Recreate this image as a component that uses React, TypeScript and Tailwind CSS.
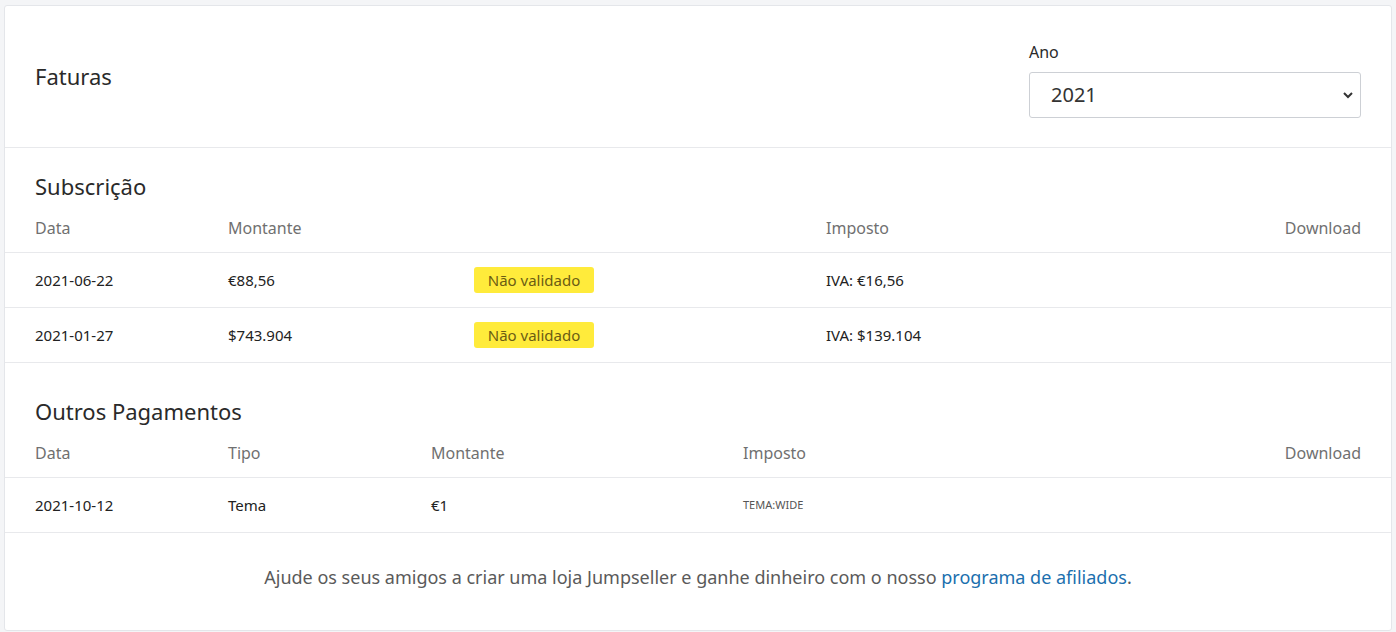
export default function App() {
  const Badge = () => (
    <span className="inline-flex h-[26px] w-[120px] items-center justify-center rounded-[3px] bg-[#ffeb3b] text-[15px] text-[#6b5c14]">Não validado</span>
  );
  const th = "text-[16px] text-[#707070]";
  const td = "text-[15px] text-[#222]";
  return (
    <div className="min-h-[632px] bg-[#f4f5f7] px-[4px] pt-[5px] font-['Lato','Noto_Sans',sans-serif]">
      <div className="h-[626px] rounded-[3px] border border-[#e4e6ea] bg-white">
        <div className="flex h-[142px] items-center justify-between border-b border-[#e8e9ec] px-[30px]">
          <h1 className="text-[22px] text-[#2a2a2a]">Faturas</h1>
          <div className="flex w-[332px] flex-col pt-[4px]">
            <span className="mb-[8px] text-[16px] text-[#2a2a2a]">Ano</span>
            <div className="flex h-[46px] items-center justify-between rounded-[3px] border border-[#cdd0d5] pl-[21px] pr-[6px] text-[20px] text-[#333]">
              2021
              <svg width="12" height="12" viewBox="0 0 12 12"><path d="M2 4l4 4 4-4" fill="none" stroke="#333" strokeWidth="2" /></svg>
            </div>
          </div>
        </div>
        <div className="px-[30px] pt-[22px]">
          <h2 className="text-[22px] text-[#2a2a2a]">Subscrição</h2>
        </div>
        <div className={"mx-[0px] mt-[10px] flex h-[40px] items-center border-b border-[#e8e9ec] px-[30px] pb-[10px] " + th}>
          <div className="w-[193px]">Data</div>
          <div className="w-[246px]">Montante</div>
          <div className="w-[352px]"></div>
          <div className="flex-1">Imposto</div>
          <div>Download</div>
        </div>
        {[["2021-06-22", "€88,56", "IVA: €16,56"], ["2021-01-27", "$743.904", "IVA: $139.104"]].map((r) => (
          <div key={r[0]} className={"flex h-[55px] items-center border-b border-[#e8e9ec] px-[30px] " + td}>
            <div className="w-[193px]">{r[0]}</div>
            <div className="w-[246px]">{r[1]}</div>
            <div className="w-[352px]"><Badge /></div>
            <div className="flex-1">{r[2]}</div>
          </div>
        ))}
        <div className="px-[30px] pt-[32px]">
          <h2 className="text-[22px] text-[#2a2a2a]">Outros Pagamentos</h2>
        </div>
        <div className={"mt-[10px] flex h-[40px] items-center border-b border-[#e8e9ec] px-[30px] pb-[10px] " + th}>
          <div className="w-[193px]">Data</div>
          <div className="w-[203px]">Tipo</div>
          <div className="w-[312px]">Montante</div>
          <div className="flex-1">Imposto</div>
          <div>Download</div>
        </div>
        <div className={"flex h-[55px] items-center border-b border-[#e8e9ec] px-[30px] " + td}>
          <div className="w-[193px]">2021-10-12</div>
          <div className="w-[203px]">Tema</div>
          <div className="w-[312px]">€1</div>
          <div className="flex-1 text-[11px] text-[#555]">TEMA:WIDE</div>
        </div>
        <div className="flex h-[88px] items-center justify-center text-[18px] text-[#5a5a5a]">
          <span>Ajude os seus amigos a criar uma loja Jumpseller e ganhe dinheiro com o nosso <a className="text-[#1b6fae]">programa de afiliados</a>.</span>
        </div>
      </div>
    </div>
  );
}
